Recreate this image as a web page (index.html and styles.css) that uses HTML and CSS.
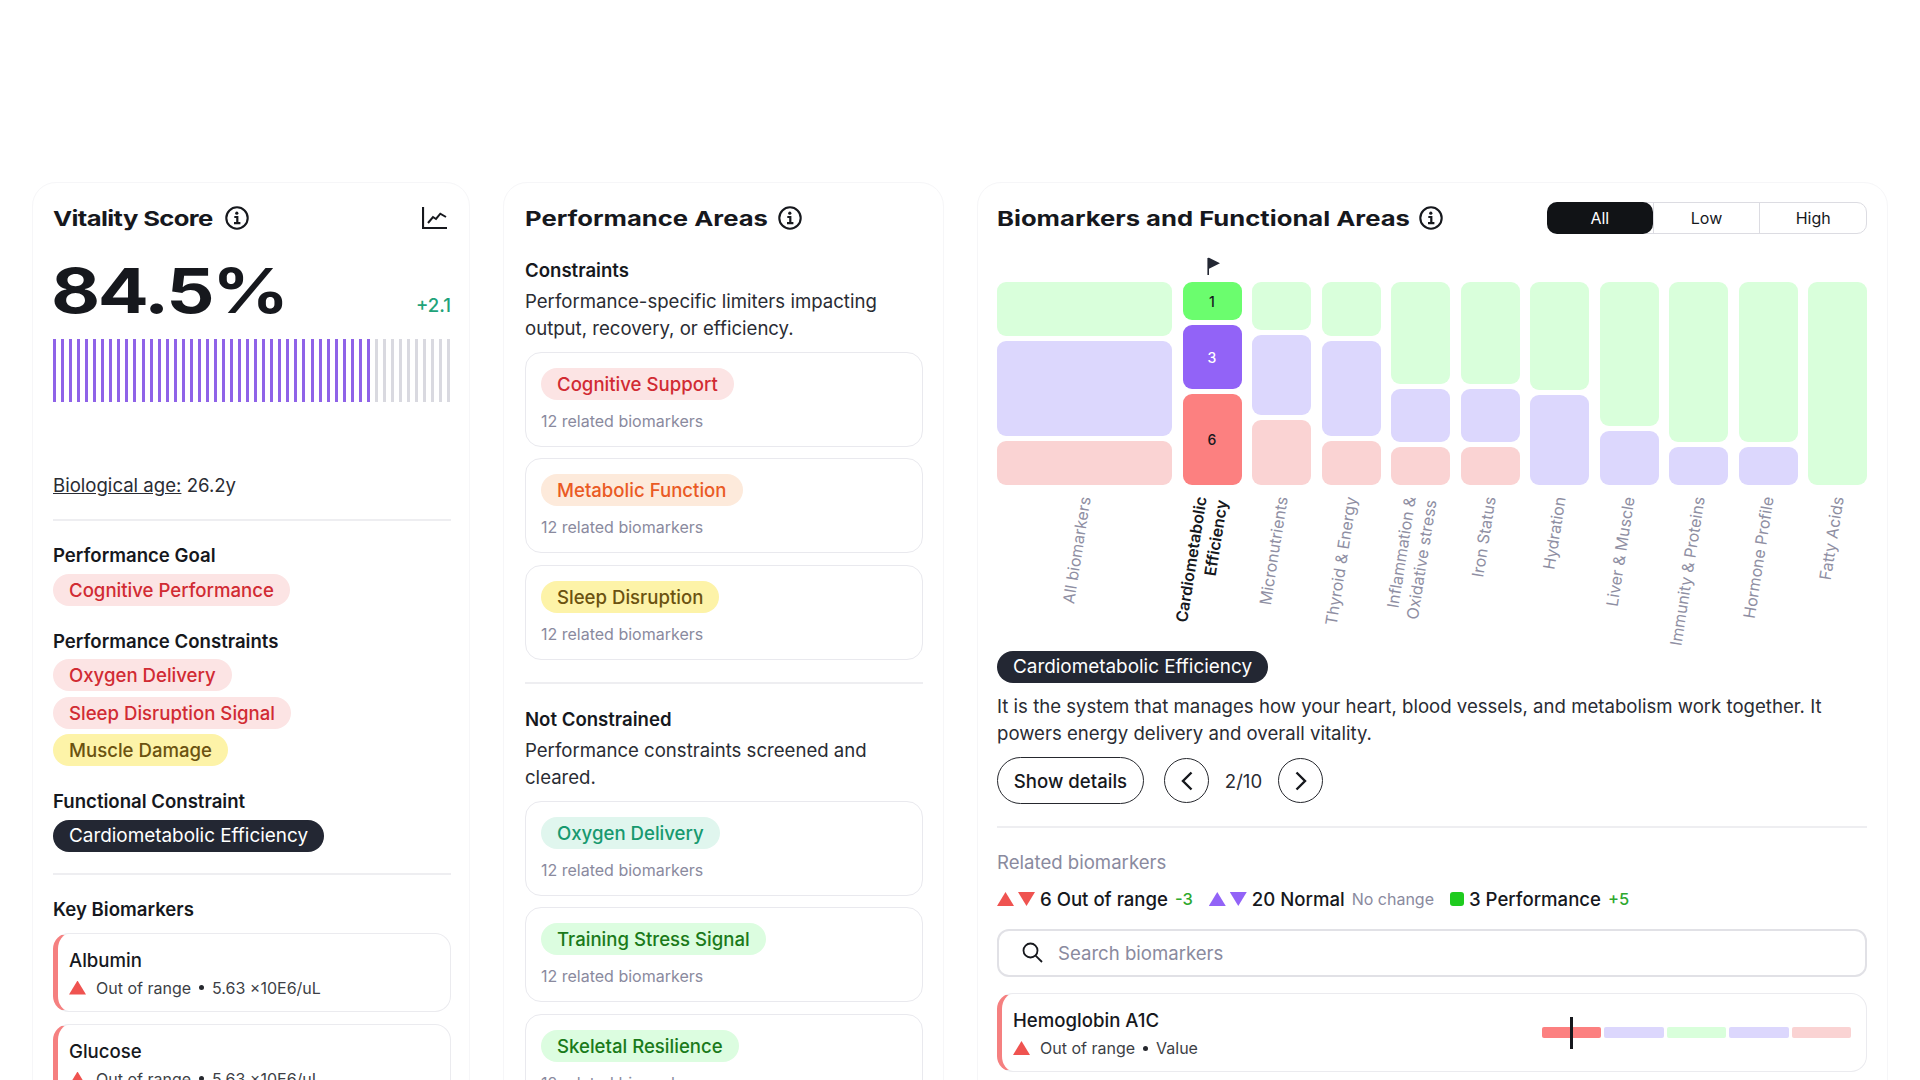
FILE: index.html
```html
<!DOCTYPE html>
<html lang="en">
<head>
    <meta charset="UTF-8">
    <meta name="viewport" content="width=device-width, initial-scale=1.0">
    <title>Vitality dashboard</title>
    <link rel="stylesheet" href="styles.css">
</head>
<body>
    <svg class="sprite" width="0" height="0" aria-hidden="true">
        <symbol id="icon-info" viewBox="0 0 24 24">
            <circle cx="12" cy="12" r="10.7" fill="none" stroke="currentColor" stroke-width="2.1"/>
            <path d="M9.3 11h3v6.2M9 17.2h6.4" fill="none" stroke="currentColor" stroke-width="2.2"/>
            <circle cx="11.8" cy="7.2" r="1.6" fill="currentColor"/>
        </symbol>
    </svg>

    <main class="dashboard">
        <section class="panel panel-vitality">
            <header class="panel-header">
                <h2 class="panel-title">Vitality Score</h2>
                <svg class="info-icon"><use href="#icon-info"/></svg>
                <svg class="chart-icon" viewBox="0 0 26 22" fill="none" stroke="#16181d" stroke-width="2.2">
                    <path d="M1 0V21H25"/>
                    <path d="M6 16L11 10L14 12L18.3 6.7L24 10" stroke-width="2"/>
                </svg>
            </header>

            <div class="score-row">
                <div class="score-value">84.5%</div>
                <div class="score-delta">+2.1</div>
            </div>

            <div class="score-bars">
                <span></span><span></span><span></span><span></span><span></span><span></span><span></span><span></span><span></span><span></span>
                <span></span><span></span><span></span><span></span><span></span><span></span><span></span><span></span><span></span><span></span>
                <span></span><span></span><span></span><span></span><span></span><span></span><span></span><span></span><span></span><span></span>
                <span></span><span></span><span></span><span></span><span></span><span></span><span></span><span></span><span></span><span></span>
                <span class="off"></span><span class="off"></span><span class="off"></span><span class="off"></span><span class="off"></span>
                <span class="off"></span><span class="off"></span><span class="off"></span><span class="off"></span><span class="off"></span>
            </div>

            <p class="bio-age"><u>Biological age:</u> 26.2y</p>
            <hr class="divider divider-age">

            <h3 class="label">Performance Goal</h3>
            <div class="tags">
                <span class="tag tag-red">Cognitive Performance</span>
            </div>

            <h3 class="label">Performance Constraints</h3>
            <div class="tags">
                <span class="tag tag-red">Oxygen Delivery</span>
                <span class="tag tag-red">Sleep Disruption Signal</span>
                <span class="tag tag-yellow">Muscle Damage</span>
            </div>

            <h3 class="label">Functional Constraint</h3>
            <div class="tags">
                <span class="tag tag-dark">Cardiometabolic Efficiency</span>
            </div>
            <hr class="divider divider-key">

            <h3 class="label label-key">Key Biomarkers</h3>
            <div class="marker-list">
                <div class="marker-card">
                    <div class="marker-name">Albumin</div>
                    <div class="marker-sub"><i class="tri tri-up red"></i>Out of range<b class="dot"></b>5.63 ×10E6/uL</div>
                </div>
                <div class="marker-card">
                    <div class="marker-name">Glucose</div>
                    <div class="marker-sub"><i class="tri tri-up red"></i>Out of range<b class="dot"></b>5.63 ×10E6/uL</div>
                </div>
            </div>
        </section>

        <section class="panel panel-areas">
            <header class="panel-header">
                <h2 class="panel-title">Performance Areas</h2>
                <svg class="info-icon"><use href="#icon-info"/></svg>
            </header>

            <h3 class="label label-first">Constraints</h3>
            <p class="area-text">Performance-specific limiters impacting output, recovery, or efficiency.</p>
            <div class="area-list">
                <div class="area-card">
                    <span class="tag tag-red">Cognitive Support</span>
                    <div class="area-count">12 related biomarkers</div>
                </div>
                <div class="area-card">
                    <span class="tag tag-orange">Metabolic Function</span>
                    <div class="area-count">12 related biomarkers</div>
                </div>
                <div class="area-card">
                    <span class="tag tag-yellow">Sleep Disruption</span>
                    <div class="area-count">12 related biomarkers</div>
                </div>
            </div>
            <hr class="divider divider-areas">

            <h3 class="label label-clear">Not Constrained</h3>
            <p class="area-text">Performance constraints screened and cleared.</p>
            <div class="area-list">
                <div class="area-card">
                    <span class="tag tag-teal">Oxygen Delivery</span>
                    <div class="area-count">12 related biomarkers</div>
                </div>
                <div class="area-card">
                    <span class="tag tag-green">Training Stress Signal</span>
                    <div class="area-count">12 related biomarkers</div>
                </div>
                <div class="area-card">
                    <span class="tag tag-green">Skeletal Resilience</span>
                    <div class="area-count">12 related biomarkers</div>
                </div>
            </div>
        </section>

        <section class="panel panel-biomarkers">
            <header class="panel-header">
                <h2 class="panel-title">Biomarkers and Functional Areas</h2>
                <svg class="info-icon"><use href="#icon-info"/></svg>
                <div class="segmented">
                    <button class="active">All</button>
                    <button>Low</button>
                    <button>High</button>
                </div>
            </header>

            <div class="treemap">
                <div class="tree-col">
                    <div class="cell green" style="height: 54px"></div>
                    <div class="cell violet" style="height: 95px"></div>
                    <div class="cell red" style="height: 44px"></div>
                </div>
                <div class="tree-col flagged">
                    <svg class="flag" viewBox="0 0 13 18"><path d="M1.2 18V1" stroke="#232733" stroke-width="1.6"/><path d="M1.5 .5L13 6.2L1.5 12Z" fill="#232733"/></svg>
                    <div class="cell green strong" style="height: 38px">1</div>
                    <div class="cell violet strong" style="height: 64px">3</div>
                    <div class="cell red strong" style="height: 91px">6</div>
                </div>
                <div class="tree-col">
                    <div class="cell green" style="height: 48px"></div>
                    <div class="cell violet" style="height: 80px"></div>
                    <div class="cell red" style="height: 65px"></div>
                </div>
                <div class="tree-col">
                    <div class="cell green" style="height: 54px"></div>
                    <div class="cell violet" style="height: 95px"></div>
                    <div class="cell red" style="height: 44px"></div>
                </div>
                <div class="tree-col">
                    <div class="cell green" style="height: 102px"></div>
                    <div class="cell violet" style="height: 53px"></div>
                    <div class="cell red" style="height: 38px"></div>
                </div>
                <div class="tree-col">
                    <div class="cell green" style="height: 102px"></div>
                    <div class="cell violet" style="height: 53px"></div>
                    <div class="cell red" style="height: 38px"></div>
                </div>
                <div class="tree-col">
                    <div class="cell green" style="height: 108px"></div>
                    <div class="cell violet" style="height: 90px"></div>
                </div>
                <div class="tree-col">
                    <div class="cell green" style="height: 144px"></div>
                    <div class="cell violet" style="height: 54px"></div>
                </div>
                <div class="tree-col">
                    <div class="cell green" style="height: 160px"></div>
                    <div class="cell violet" style="height: 38px"></div>
                </div>
                <div class="tree-col">
                    <div class="cell green" style="height: 160px"></div>
                    <div class="cell violet" style="height: 38px"></div>
                </div>
                <div class="tree-col">
                    <div class="cell green" style="height: 203px"></div>
                </div>
            </div>

            <div class="axis">
                <div class="axis-cell"><span class="axis-label">All biomarkers</span></div>
                <div class="axis-cell"><span class="axis-label two-line current">Cardiometabolic<br>Efficiency</span></div>
                <div class="axis-cell"><span class="axis-label">Micronutrients</span></div>
                <div class="axis-cell"><span class="axis-label">Thyroid &amp; Energy</span></div>
                <div class="axis-cell"><span class="axis-label two-line">Inflammation &amp;<br>Oxidative stress</span></div>
                <div class="axis-cell"><span class="axis-label">Iron Status</span></div>
                <div class="axis-cell"><span class="axis-label">Hydration</span></div>
                <div class="axis-cell"><span class="axis-label">Liver &amp; Muscle</span></div>
                <div class="axis-cell"><span class="axis-label">Immunity &amp; Proteins</span></div>
                <div class="axis-cell"><span class="axis-label">Hormone Profile</span></div>
                <div class="axis-cell"><span class="axis-label">Fatty Acids</span></div>
            </div>

            <span class="tag tag-dark">Cardiometabolic Efficiency</span>
            <p class="system-text">It is the system that manages how your heart, blood vessels, and metabolism work together. It powers energy delivery and overall vitality.</p>

            <div class="actions">
                <button class="details-btn">Show details</button>
                <button class="round-btn">
                    <svg viewBox="0 0 12 20" fill="none" stroke="#16181d" stroke-width="2.4"><path d="M10.5 1.5L2 10L10.5 18.5"/></svg>
                </button>
                <span class="pager">2/10</span>
                <button class="round-btn">
                    <svg viewBox="0 0 12 20" fill="none" stroke="#16181d" stroke-width="2.4"><path d="M1.5 1.5L10 10L1.5 18.5"/></svg>
                </button>
            </div>
            <hr class="divider divider-related">

            <h3 class="related-title">Related biomarkers</h3>
            <div class="legend">
                <i class="tri tri-up red"></i><i class="tri tri-down red"></i>
                <span class="legend-text">6 Out of range</span>
                <span class="legend-delta">-3</span>
                <i class="tri tri-up violet legend-gap"></i><i class="tri tri-down violet"></i>
                <span class="legend-text">20 Normal</span>
                <span class="legend-note">No change</span>
                <i class="legend-square"></i>
                <span class="legend-text">3 Performance</span>
                <span class="legend-delta">+5</span>
            </div>

            <div class="search">
                <svg class="search-icon" viewBox="0 0 22 22" fill="none" stroke="#16181d" stroke-width="1.8">
                    <circle cx="8.5" cy="8.5" r="7"/>
                    <path d="M13.6 13.6L20 20"/>
                </svg>
                <span class="search-text">Search biomarkers</span>
            </div>

            <div class="marker-card marker-row">
                <div>
                    <div class="marker-name">Hemoglobin A1C</div>
                    <div class="marker-sub"><i class="tri tri-up red"></i>Out of range<b class="dot"></b>Value</div>
                </div>
                <div class="range">
                    <span class="range-red"></span>
                    <span class="range-violet"></span>
                    <span class="range-green"></span>
                    <span class="range-violet"></span>
                    <span class="range-pink"></span>
                    <i class="range-marker"></i>
                </div>
            </div>
        </section>
    </main>
</body>
</html>
```

FILE: styles.css
```css
html, body {
    margin: 0;
    padding: 0;
    height: 100%;
    overflow: hidden;
    background: #fff;
    color: #16181d;
    font-family: Inter, "Liberation Sans", sans-serif;
    font-size: 18.6px;
}

.sprite {
    position: absolute;
}

.dashboard {
    display: grid;
    grid-template-columns: 438px 441px 911px;
    gap: 33px;
    padding: 182px 0 0 32px;
}

.panel {
    height: 1200px;
    box-sizing: border-box;
    padding: 20px 20px 0;
    border: 1px solid #f6f6f8;
    border-radius: 24px;
}

.panel-vitality {
    padding-right: 18px;
}

.panel-areas {
    padding-left: 21px;
}

.panel-biomarkers {
    padding-left: 19px;
}

.panel-header {
    display: flex;
    align-items: center;
    height: 30px;
}

/* the titles use a wide face, so Inter is stretched to the same width */
.panel-title {
    margin: 0 11px 0 0;
    font-size: 20.5px;
    font-weight: 700;
    white-space: nowrap;
    transform: scaleX(1.25);
    transform-origin: left center;
}

.panel-vitality .panel-title { width: 161px; letter-spacing: -0.5px; }
.panel-areas .panel-title { width: 242px; }
.panel-biomarkers .panel-title { width: 411px; }

.info-icon {
    width: 24px;
    height: 24px;
    color: #16181d;
}

.chart-icon {
    width: 26px;
    height: 22px;
    margin-left: auto;
    margin-right: 3px;
}

.score-row {
    display: flex;
    justify-content: space-between;
    margin-top: 23px;
    height: 68px;
}

.score-value {
    width: 232px;
    margin-left: -2px;
    font-size: 62px;
    font-weight: 700;
    letter-spacing: -2px;
    line-height: 70px;
    transform: scaleX(1.22);
    transform-origin: left center;
}

.score-delta {
    align-self: flex-end;
    margin-bottom: 7px;
    line-height: 24px;
    font-weight: 500;
    color: #1fa37a;
}

.score-bars {
    display: flex;
    justify-content: space-between;
    height: 63px;
    margin-top: 15px;
}

.score-bars span {
    width: 3px;
    background: #8f63e8;
}

.score-bars span.off {
    background: #d9d9e0;
}

.bio-age {
    margin: 70px 0 0;
    line-height: 27px;
    color: #2a2c33;
}

.divider {
    margin: 0;
    border: 0;
    border-top: 2px solid #eeeef1;
}

.divider-age { margin-top: 20px; }
.divider-key { margin-top: 21px; }
.divider-areas { margin-top: 22.5px; }
.divider-related { margin-top: 22px; }

.label {
    margin: 23px 0 6.5px;
    font-size: 18.6px;
    font-weight: 600;
    line-height: 24px;
}

.divider-age + .label {
    margin-top: 22px;
}

.label-key {
    margin: 22px 0 12px;
}

.label-first {
    margin: 25px 0 6px;
}

.label-clear {
    margin: 23px 0 6px;
}

.tags {
    display: flex;
    flex-direction: column;
    align-items: flex-start;
    gap: 5.5px;
}

.tag {
    display: inline-block;
    height: 32px;
    padding: 0 16px;
    border-radius: 16px;
    font-weight: 500;
    line-height: 32px;
    white-space: nowrap;
}

.tag-red { background: #fce4e4; color: #d12b33; }
.tag-orange { background: #fdeadb; color: #ea5a24; }
.tag-yellow { background: #fdf3a8; color: #6b5210; }
.tag-teal { background: #e0f6ee; color: #17996f; }
.tag-green { background: #dcfde0; color: #1a7a1a; }
.tag-dark { background: #232733; color: #fff; font-size: 18.9px; font-weight: 400; }

.marker-list {
    display: flex;
    flex-direction: column;
    gap: 12px;
}

.marker-card {
    box-sizing: border-box;
    height: 79px;
    padding: 13px 11px 0;
    border: 1px solid #ebebef;
    border-left: 5px solid #f58080;
    border-radius: 16px;
    background: #fff;
}

.marker-name {
    line-height: 26px;
    font-weight: 450;
}

.marker-sub {
    display: flex;
    align-items: center;
    margin-top: 4px;
    font-size: 16px;
    line-height: 22px;
    color: #3d3f46;
}

.marker-sub .tri {
    margin-right: 10px;
}

.dot {
    width: 5px;
    height: 5px;
    margin: 0 8px;
    border-radius: 50%;
    background: #26282e;
}

.tri {
    display: inline-block;
    flex: none;
    width: 17px;
    height: 14px;
}

.tri-up { clip-path: polygon(50% 0, 100% 100%, 0 100%); }
.tri-down { clip-path: polygon(0 0, 100% 0, 50% 100%); }
.tri.red { background: #ef5350; }
.tri.violet { background: #9263f7; }

.area-text {
    margin: 0;
    line-height: 27px;
    color: #2a2c33;
}

.area-list {
    display: flex;
    flex-direction: column;
    gap: 11.5px;
    margin-top: 9.5px;
}

.area-card {
    box-sizing: border-box;
    height: 95px;
    padding: 15px 15px 0;
    border: 1px solid #e9e9ee;
    border-radius: 16px;
}

.area-count {
    margin-top: 10px;
    font-size: 16px;
    line-height: 22px;
    color: #8a8a9e;
}

.segmented {
    display: flex;
    width: 320px;
    height: 32px;
    margin-left: auto;
    box-sizing: border-box;
    border: 1px solid #dcdce2;
    border-radius: 10px;
}

.segmented button {
    flex: 1;
    padding: 0;
    border: 0;
    border-left: 1px solid #dcdce2;
    background: none;
    color: #16181d;
    font: inherit;
    font-size: 16px;
}

.segmented button:first-child {
    border-left: 0;
}

.segmented button.active {
    margin: -1px 0 -1px -1px;
    border-radius: 10px;
    background: #111316;
    color: #fff;
}

.treemap,
.axis {
    display: grid;
    grid-template-columns: 175px repeat(10, 1fr);
    column-gap: 10.5px;
}

.treemap {
    margin-top: 49px;
}

.tree-col {
    position: relative;
    display: flex;
    flex-direction: column;
    gap: 5px;
}

.flag {
    position: absolute;
    left: 24px;
    bottom: 100%;
    width: 13px;
    height: 18px;
    margin-bottom: 7px;
}

.cell {
    display: flex;
    align-items: center;
    justify-content: center;
    border-radius: 9px;
    font-size: 14px;
    font-weight: 500;
}

.cell.green { background: #d9ffdb; }
.cell.violet { background: #dcd7fd; }
.cell.red { background: #fad3d3; }
.cell.green.strong { background: #6bfd6e; }
.cell.violet.strong { background: #9263f7; color: #fff; }
.cell.red.strong { background: #fc8080; }

.axis {
    height: 156px;
    margin-top: 10px;
}

.axis-cell {
    min-width: 0;
}

.axis-label {
    display: block;
    width: 170px;
    margin-left: calc(50% - 181px);
    font-size: 16px;
    line-height: 22px;
    text-align: right;
    white-space: nowrap;
    color: #8f8fa3;
    transform: rotate(-81deg);
    transform-origin: 100% 0;
}

.axis-label.two-line {
    margin-left: calc(50% - 191px);
    line-height: 21px;
}

.axis-label.current {
    font-weight: 600;
    color: #16181d;
}

.system-text {
    margin: 10px 0 0;
    line-height: 27px;
    color: #2a2c33;
}

.actions {
    display: flex;
    align-items: center;
    margin-top: 10px;
}

.details-btn {
    width: 147px;
    height: 47px;
    padding: 0;
    border: 1.5px solid #26282e;
    border-radius: 24px;
    background: #fff;
    color: #16181d;
    font: inherit;
    font-weight: 500;
}

.round-btn {
    display: flex;
    align-items: center;
    justify-content: center;
    width: 45px;
    height: 45px;
    padding: 0;
    border: 1.5px solid #26282e;
    border-radius: 50%;
    background: #fff;
}

.details-btn + .round-btn {
    margin-left: 20px;
}

.round-btn svg {
    width: 12px;
    height: 20px;
}

.pager {
    width: 69px;
    text-align: center;
    color: #2a2c33;
}

.related-title {
    margin: 22px 0 13px;
    font-size: 18.6px;
    font-weight: 400;
    line-height: 24px;
    color: #8a8a9e;
}

.legend {
    display: flex;
    align-items: center;
    height: 24px;
}

.legend .tri + .tri {
    margin-left: 4px;
}

.legend-text {
    margin-left: 5px;
    font-weight: 500;
}

.legend-delta {
    margin-left: 7px;
    font-size: 16.5px;
    font-weight: 500;
    color: #2ea82e;
}

.legend .legend-gap {
    margin-left: 16px;
}

.legend-note {
    margin-left: 7px;
    font-size: 16px;
    color: #8a8a9e;
}

.legend-square {
    width: 14px;
    height: 14px;
    margin-left: 16px;
    border-radius: 3px;
    background: #1ecb1e;
}

.search {
    display: flex;
    align-items: center;
    box-sizing: border-box;
    height: 48px;
    margin-top: 18px;
    padding-left: 23px;
    border: 2px solid #e1e1e6;
    border-radius: 12px;
}

.search-icon {
    width: 22px;
    height: 22px;
}

.search-text {
    margin-left: 14px;
    color: #8a8a9e;
}

.marker-row {
    display: flex;
    align-items: flex-start;
    justify-content: space-between;
    margin-top: 16px;
    padding-right: 15px;
}

.range {
    position: relative;
    display: grid;
    grid-template-columns: repeat(5, 1fr);
    gap: 3px;
    width: 309px;
    height: 11px;
    margin-top: 20px;
}

.range span {
    border-radius: 2px;
}

.range-red { background: #fc8080; }
.range-violet { background: #dcd7fd; }
.range-green { background: #d9ffdb; }
.range-pink { background: #fad3d3; }

.range-marker {
    position: absolute;
    left: 28px;
    top: -10px;
    width: 3px;
    height: 32px;
    background: #16181d;
}
```
